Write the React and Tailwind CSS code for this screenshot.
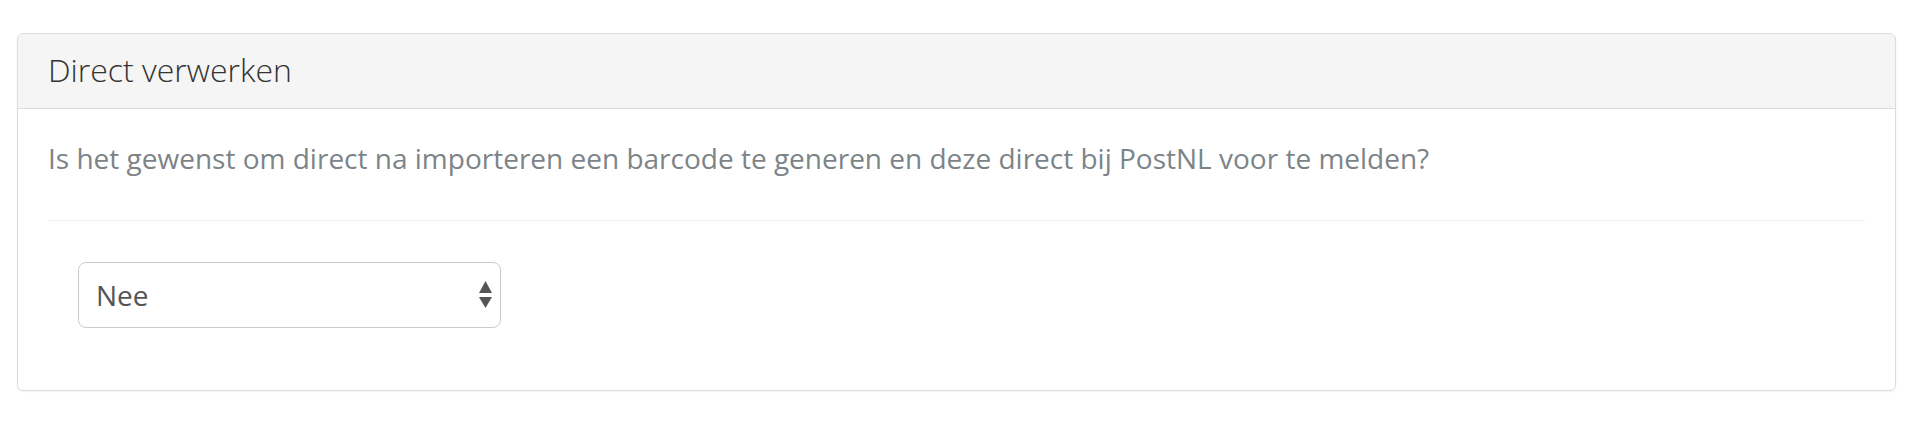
import React from "react";

export default function App() {
  return (
    <div className="w-[1914px] h-[428px] bg-white pt-[33px] pl-[17px] pr-[18px]" style={{ fontFamily: '"Open Sans", sans-serif' }}>
      <div className="border border-[#dcdcdc] rounded-[6px] shadow-[0_1px_2px_rgba(0,0,0,0.06)] overflow-hidden">
        <div className="bg-[#f5f5f5] border-b border-[#dcdcdc] px-[30px] pt-[18px] pb-[21px]">
          <h3 className="text-[32px] leading-[35px] font-light text-[#333]">Direct verwerken</h3>
        </div>
        <div className="px-[30px] pt-[29px] pb-[62px]">
          <p className="text-[28px] leading-[40px] text-[#7d8488]">
            Is het gewenst om direct na importeren een barcode te generen en deze direct bij PostNL voor te melden?
          </p>
          <div className="mt-[42px] mb-[41px] h-px bg-[#eeeeee]" />
          <div className="pl-[30px]">
            <div className="relative w-[423px] h-[66px]">
              <select
                className="appearance-none w-full h-full border border-[#cccccc] rounded-[8px] bg-white pl-[17px] pr-[40px] text-[28px] text-[#555] outline-none"
                style={{ fontFamily: '"Open Sans", sans-serif' }}
                defaultValue="Nee"
              >
                <option>Nee</option>
                <option>Ja</option>
              </select>
              <svg className="absolute right-[9px] top-[19px] pointer-events-none" width="13" height="27" viewBox="0 0 13 27">
                <polygon points="6.5,0 13,12 0,12" fill="#555" />
                <polygon points="0,16 13,16 6.5,27" fill="#555" />
              </svg>
            </div>
          </div>
        </div>
      </div>
    </div>
  );
}
